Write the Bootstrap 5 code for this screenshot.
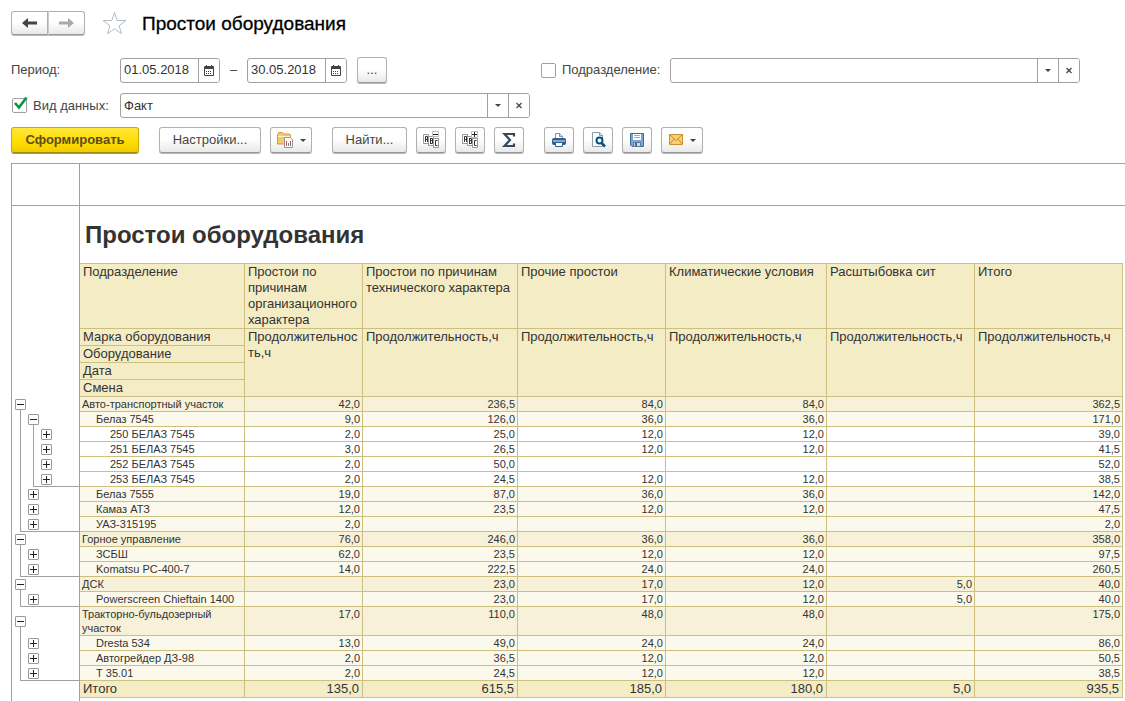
<!DOCTYPE html>
<html lang="ru">
<head>
<meta charset="utf-8">
<meta name="viewport" content="width=device-width, initial-scale=1">
<title>Простои оборудования</title>
<link rel="stylesheet" href="https://cdn.jsdelivr.net/npm/bootstrap@5.3.0/dist/css/bootstrap.min.css">
<style>
:root { --line: #a0a0a0; --gold: #ccbf80; --gutter: 69px; }
body { font: 13px/16px "Liberation Sans", Arial, sans-serif; color: #444; background: #fff; }
.page { padding: 10px 0 0 11px; }
.page-head { margin-bottom: 21px; }
.app-title { font-size: 19px; line-height: 24px; padding-top: 2px; color: #000; -webkit-text-stroke: 0.3px #000; }

/* push buttons */
.tool { display: inline-flex; align-items: center; justify-content: center; height: 26px; width: 30px; padding: 0;
  font-size: 13px; line-height: 16px; color: #444; border: 1px solid #b0b0b0; border-bottom-color: #989898; border-radius: 3px;
  background: linear-gradient(#fff 45%, #e9e9e9); box-shadow: 0 1px 0 #b8b8b8; }
.tool-main { width: 128px; font-weight: 700; color: #5c4e1c; border-color: #c9a800; border-bottom-color: #a08a10;
  background: linear-gradient(#ffe83a, #fddc00 60%, #f0cd00); box-shadow: 0 1px 0 #a89a50; }
.tool-settings { width: 102px; }
.tool-find { width: 75px; }
.tool-menu { width: 42px; gap: 6px; }
.history .tool { height: 24px; width: 37px; }
.history .tool + .tool { border-left-color: #ccc; }
.arrow { width: 0; height: 0; border: 3px solid transparent; border-top-color: #444; border-bottom: 0; }
.toolbar { gap: 20px; margin-bottom: 10px; }
.tool-set { display: flex; gap: 9px; }

/* fields */
.field { display: flex; height: 25px; border: 1px solid var(--line); border-radius: 3px; background: #fff; overflow: hidden; }
.field input, .field select { flex: 1 1 0; min-width: 0; border: 0; padding: 0 3px; background: none; appearance: none; font-size: 13px; color: #333; outline: 0; }
.field button { flex: none; width: 21px; padding: 0; border: 0; border-left: 1px solid var(--line); background: #fff; display: flex; align-items: center; justify-content: center; }
.field-date { width: 100px; }
.dash { width: 27px; }
.more { margin-left: 10px; }
.filters { grid-template-columns: 109px 410px 11px 129px minmax(0, 410px); row-gap: 10px; margin-bottom: 9px; }
.check { display: flex; align-items: center; gap: 6px; }
.tick { appearance: none; width: 15px; height: 15px; margin: 0; border: 1px solid var(--line); border-radius: 2px; background: #fff; }
.tick-box { width: 15px; height: 15px; margin-left: 1px; }
.tick-box svg { left: 1px; top: -2px; pointer-events: none; }

/* report sheet */
.report-area { color: #333; }
.gutter { flex: none; width: var(--gutter); border: 0 solid var(--line); border-width: 0 1px; }
.ruler { height: 43px; border: solid var(--line); border-width: 1px 0; }
.sheet-title { margin: 0; padding: 15px 5px 0; height: 57px; font-size: 24px; line-height: 28px; font-weight: 700; }
.report { table-layout: fixed; width: calc(100% - 2px); min-width: 1112px; border-collapse: separate; border-spacing: 0; font-size: 11px; line-height: 14px; }
.report th, .report td { padding: 0 2px; border: 0 solid var(--gold); border-width: 0 1px 1px 0; vertical-align: top; font-weight: 400; text-align: left; }
.report td { text-align: right; }
.report tbody tr { height: 15px; }
.report thead th { font-size: 13px; line-height: 16px; padding: 0 3px; background: #f4ecc5; }
.report thead tr { height: 17px; }
.report thead tr:first-child { height: 66px; }
.report thead tr:first-child th { border-top-width: 1px; }
.report tr > .rail { padding: 0; border: 0 solid var(--line); border-width: 0 1px; background-color: #fff; background-repeat: no-repeat; vertical-align: middle; text-align: left; line-height: 0; }
.g1 > * { background: #f7f1da; }
.g2 > * { background: #fbf9ec; }
.g2 > th { --in: 16px; }
.g3 > th { --in: 30px; }
.report tbody th { padding-left: var(--in, 2px); }
.report .total > * { font-size: 13px; line-height: 16px; background-color: #f4ecc5; }
.report .total > th { padding-left: 3px; }
.report .total > td { padding-right: 3px; }
.report .total { height: 17px; }

/* outline rails: "a" is the outer level, "b" the inner one */
.rail { --c: linear-gradient(var(--line), var(--line)); }
.report .a-start { background-image: var(--c); background-size: 1px 50%; background-position: 8px 100%; }
.report .a-mid { background-image: var(--c); background-size: 1px 100%; background-position: 8px 0; }
.report .a-end { background-image: var(--c), var(--c); background-size: 1px 100%, 100% 1px; background-position: 8px 0, 8px 100%; }
.report .b-start { background-image: var(--c), var(--c); background-size: 1px 100%, 1px 50%; background-position: 8px 0, 21px 100%; }
.report .b-mid { background-image: var(--c), var(--c); background-size: 1px 100%; background-position: 8px 0, 21px 0; }
.report .b-end { background-image: var(--c), var(--c), var(--c); background-size: 1px 100%, 1px 100%, 100% 1px; background-position: 8px 0, 21px 0, 21px 100%; }
.fold { display: block; width: 11px; height: 11px; padding: 0; margin-left: 3px; border: 1px solid #999; border-radius: 1px;
  background: linear-gradient(#222, #222) center / 7px 1px no-repeat #fff; }
.g2 .fold, .g3 .fold { background: linear-gradient(#222, #222) center / 7px 1px no-repeat, linear-gradient(#222, #222) center / 1px 7px no-repeat #fff; }
.g2 .b-start .fold { background: linear-gradient(#222, #222) center / 7px 1px no-repeat #fff; }
.g2 .fold { margin-left: 16px; }
.g3 .fold { margin-left: 29px; }
</style>
</head>
<body>
<div class="page d-flex flex-column min-vh-100">

  <header class="page-head d-flex align-items-center">
    <div class="history d-flex">
      <button class="tool rounded-end-0" type="button" aria-label="Назад"><svg width="15" height="10" viewBox="0 0 15 10"><path d="M0 5l6-5v3.500h9v3H6V10z" fill="#444"/></svg></button>
      <button class="tool rounded-start-0" type="button" aria-label="Вперёд"><svg width="15" height="10" viewBox="0 0 15 10"><path d="M15 5L9 0v3.500H0v3h9V10z" fill="#aaa"/></svg></button>
    </div>
    <svg class="ms-3 me-3" width="25" height="24" viewBox="0 0 25 24"><path d="M13.500 1.500l2.700 8H25l-7 5.200 2.600 8.100-7.100-5-7.100 5L9 14.700 2 9.500h8.800z" fill="#fff" stroke="#b4bcc4"/></svg>
    <h1 class="app-title m-0">Простои оборудования</h1>
  </header>

  <form class="filters d-grid align-items-center">
    <label for="from">Период:</label>
    <div class="d-flex align-items-center">
      <div class="field field-date"><input id="from" type="text" value="01.05.2018"><button type="button" aria-label="Календарь"><svg width="10" height="11" viewBox="0 0 10 11"><path d="M0 2q0-1 1-1h8q1 0 1 1v8q0 1-1 1H1q-1 0-1-1z" fill="#444"/><path d="M1 4h8v6H1z" fill="#fff"/><path d="M2.500 0v2M7.500 0v2" stroke="#444"/><path d="M2 6.500h6M2 8.500h6" stroke="#444" stroke-dasharray="1 1"/></svg></button></div>
      <span class="dash text-center">–</span>
      <div class="field field-date"><input type="text" value="30.05.2018" aria-label="Конец периода"><button type="button" aria-label="Календарь"><svg width="10" height="11" viewBox="0 0 10 11"><path d="M0 2q0-1 1-1h8q1 0 1 1v8q0 1-1 1H1q-1 0-1-1z" fill="#444"/><path d="M1 4h8v6H1z" fill="#fff"/><path d="M2.500 0v2M7.500 0v2" stroke="#444"/><path d="M2 6.500h6M2 8.500h6" stroke="#444" stroke-dasharray="1 1"/></svg></button></div>
      <button class="tool more" type="button">...</button>
    </div>
    <span></span>
    <div class="check"><input class="tick" id="dep-on" type="checkbox"><label for="dep-on">Подразделение:</label></div>
    <div class="field"><input type="text" aria-label="Подразделение"><button type="button" aria-label="Выбрать"><i class="arrow"></i></button><button type="button" aria-label="Очистить"><svg width="6" height="7" viewBox="0 0 6 7"><path d="M.5 1l5 5M5.500 1l-5 5" stroke="#444" stroke-width="1.200"/></svg></button></div>

    <div class="check"><span class="tick-box position-relative d-flex"><input class="tick" id="kind-on" type="checkbox" checked><svg class="position-absolute" width="15" height="14" viewBox="0 0 15 14"><path d="M2 7l4 4.500L13.500 1.500" fill="none" stroke="#009646" stroke-width="2.600"/></svg></span><label for="kind-on">Вид данных:</label></div>
    <div class="field"><select aria-label="Вид данных"><option>Факт</option></select><button type="button" aria-label="Выбрать"><i class="arrow"></i></button><button type="button" aria-label="Очистить"><svg width="6" height="7" viewBox="0 0 6 7"><path d="M.5 1l5 5M5.500 1l-5 5" stroke="#444" stroke-width="1.200"/></svg></button></div>
  </form>

  <div class="toolbar d-flex">
    <button class="tool tool-main" type="button">Сформировать</button>
    <div class="tool-set">
      <button class="tool tool-settings" type="button">Настройки...</button>
      <button class="tool tool-menu" type="button" aria-label="Варианты отчёта"><svg width="18" height="18" viewBox="0 0 18 18"><path d="M1.500 3.500l1-2h4l1 1.500h6l1 1v9H1.500z" fill="#f3c969" stroke="#cf9c45"/><path d="M2 5.500h12" stroke="#fff2c4"/><path d="M8.500 6.500h6l2 2v8h-8z" fill="#fff" stroke="#8799a8"/><path d="M10.500 10v5" stroke="#e0403a"/><path d="M12.500 12v3" stroke="#5a9a60"/><path d="M14.500 10v5" stroke="#e0403a"/></svg><i class="arrow"></i></button>
    </div>
    <div class="tool-set">
      <button class="tool tool-find" type="button">Найти...</button>
      <button class="tool" type="button" aria-label="Свернуть группы"><svg width="18" height="18" viewBox="0 0 18 18"><g fill="#fff" stroke="#999"><path d="M1.500 3.500h5v9h-5z"/><path d="M6.500 5.500h5v9h-5z"/><path d="M11.500 7.500h5v9h-5z"/></g><path d="M3.500 11V5.500h2V11M3.500 8.500h2M8.500 7v6M8.500 7.500h2v2h-2M10.500 9v3.500h-2M15.500 9.500h-2v5h2" fill="none" stroke="#333"/><path d="M10.500.5h6v5h-6z" fill="#fff" stroke="#bbb"/><path d="M11 3.500h5" stroke="#222"/></svg></button>
      <button class="tool" type="button" aria-label="Развернуть группы"><svg width="18" height="18" viewBox="0 0 18 18"><g fill="#fff" stroke="#999"><path d="M1.500 3.500h5v9h-5z"/><path d="M6.500 5.500h5v9h-5z"/><path d="M11.500 7.500h5v9h-5z"/></g><path d="M3.500 11V5.500h2V11M3.500 8.500h2M8.500 7v6M8.500 7.500h2v2h-2M10.500 9v3.500h-2M15.500 9.500h-2v5h2" fill="none" stroke="#333"/><path d="M10.500.5h6v6h-6z" fill="#fff" stroke="#bbb"/><path d="M11 3.500h5M13.500 1v5" stroke="#222"/></svg></button>
      <button class="tool" type="button" aria-label="Сумма"><svg width="14" height="16" viewBox="0 0 14 16"><path d="M12 4.500V2H2.500L8 8l-5.500 6H12v-2.500" fill="none" stroke="#34495e" stroke-width="2.200"/></svg></button>
    </div>
    <div class="tool-set">
      <button class="tool" type="button" aria-label="Печать"><svg width="16" height="16" viewBox="0 0 16 16"><path d="M4.500 7V1.500h4l3 3V7" fill="#fff" stroke="#7d94ad"/><path d="M8.500 1.500v3h3" fill="none" stroke="#7d94ad"/><rect x="1" y="6" width="14" height="7" rx="2" fill="#2f5d87"/><path d="M2 9h12" stroke="#7fa8d3" stroke-width="2"/><path d="M4.500 10.500h7v4h-7z" fill="#fff" stroke="#38618a"/></svg></button>
      <button class="tool" type="button" aria-label="Просмотр"><svg width="16" height="16" viewBox="0 0 16 16"><path d="M2.500.5h7l3 3v11h-10z" fill="#fff" stroke="#8a9bab"/><path d="M9.500.5v3h3" fill="none" stroke="#8a9bab"/><circle cx="9.500" cy="8.500" r="3" fill="#fff" stroke="#0b4f80" stroke-width="2"/><path d="M11.500 11l3.500 3.500" stroke="#0b4f80" stroke-width="2.500"/></svg></button>
      <button class="tool" type="button" aria-label="Сохранить"><svg width="14" height="14" viewBox="0 0 14 14"><path d="M.5.5h13v13H2L.5 12z" fill="#7ba6d6" stroke="#42699a"/><path d="M3 1h8v6H3z" fill="#fff"/><path d="M4 2.500h6M4 4.500h6" stroke="#8eb2dc"/><path d="M3.500 9.500h7v4h-7z" fill="#d5dbe0" stroke="#5b7896"/><path d="M5 10h2v3H5z" fill="#42699a"/></svg></button>
      <button class="tool tool-menu" type="button" aria-label="Отправить"><svg width="16" height="12" viewBox="0 0 16 12"><path d="M1.500.5h13v10h-13z" fill="#f8cf75" stroke="#c98f2e"/><path d="M2 1l6 5.500L14 1M2 10l4-5M14 10l-4-5" fill="none" stroke="#c98f2e"/></svg><i class="arrow"></i></button>
    </div>
  </div>

  <main class="report-area flex-grow-1 d-flex flex-column">
    <div class="ruler d-flex"><div class="gutter"></div></div>
    <div class="d-flex"><div class="gutter"></div><h2 class="sheet-title">Простои оборудования</h2></div>
    <table class="report">
      <colgroup><col style="width:69px"><col style="width:165px"><col style="width:118px"><col style="width:155px"><col style="width:148px"><col style="width:161px"><col style="width:148px"><col></colgroup>
      <thead>
        <tr><td class="rail" rowspan="5"></td><th>Подразделение</th><th>Простои по причинам организационного характера</th><th>Простои по причинам технического характера</th><th>Прочие простои</th><th>Климатические условия</th><th>Расштыбовка сит</th><th>Итого</th></tr>
        <tr><th>Марка оборудования</th><th rowspan="4">Продолжительнос<wbr>ть,ч</th><th rowspan="4">Продолжительность,ч</th><th rowspan="4">Продолжительность,ч</th><th rowspan="4">Продолжительность,ч</th><th rowspan="4">Продолжительность,ч</th><th rowspan="4">Продолжительность,ч</th></tr>
        <tr><th>Оборудование</th></tr>
        <tr><th>Дата</th></tr>
        <tr><th>Смена</th></tr>
      </thead>
      <tbody>
        <tr class="g1"><td class="rail a-start"><button class="fold" type="button" aria-label="Свернуть"></button></td><th>Авто-транспортный участок</th><td>42,0</td><td>236,5</td><td>84,0</td><td>84,0</td><td></td><td>362,5</td></tr>
        <tr class="g2"><td class="rail b-start"><button class="fold" type="button" aria-label="Свернуть"></button></td><th>Белаз 7545</th><td>9,0</td><td>126,0</td><td>36,0</td><td>36,0</td><td></td><td>171,0</td></tr>
        <tr class="g3"><td class="rail b-mid"><button class="fold" type="button" aria-label="Развернуть"></button></td><th>250 БЕЛАЗ 7545</th><td>2,0</td><td>25,0</td><td>12,0</td><td>12,0</td><td></td><td>39,0</td></tr>
        <tr class="g3"><td class="rail b-mid"><button class="fold" type="button" aria-label="Развернуть"></button></td><th>251 БЕЛАЗ 7545</th><td>3,0</td><td>26,5</td><td>12,0</td><td>12,0</td><td></td><td>41,5</td></tr>
        <tr class="g3"><td class="rail b-mid"><button class="fold" type="button" aria-label="Развернуть"></button></td><th>252 БЕЛАЗ 7545</th><td>2,0</td><td>50,0</td><td></td><td></td><td></td><td>52,0</td></tr>
        <tr class="g3"><td class="rail b-end"><button class="fold" type="button" aria-label="Развернуть"></button></td><th>253 БЕЛАЗ 7545</th><td>2,0</td><td>24,5</td><td>12,0</td><td>12,0</td><td></td><td>38,5</td></tr>
        <tr class="g2"><td class="rail a-mid"><button class="fold" type="button" aria-label="Развернуть"></button></td><th>Белаз 7555</th><td>19,0</td><td>87,0</td><td>36,0</td><td>36,0</td><td></td><td>142,0</td></tr>
        <tr class="g2"><td class="rail a-mid"><button class="fold" type="button" aria-label="Развернуть"></button></td><th>Камаз АТЗ</th><td>12,0</td><td>23,5</td><td>12,0</td><td>12,0</td><td></td><td>47,5</td></tr>
        <tr class="g2"><td class="rail a-end"><button class="fold" type="button" aria-label="Развернуть"></button></td><th>УАЗ-315195</th><td>2,0</td><td></td><td></td><td></td><td></td><td>2,0</td></tr>
        <tr class="g1"><td class="rail a-start"><button class="fold" type="button" aria-label="Свернуть"></button></td><th>Горное управление</th><td>76,0</td><td>246,0</td><td>36,0</td><td>36,0</td><td></td><td>358,0</td></tr>
        <tr class="g2"><td class="rail a-mid"><button class="fold" type="button" aria-label="Развернуть"></button></td><th>ЗСБШ</th><td>62,0</td><td>23,5</td><td>12,0</td><td>12,0</td><td></td><td>97,5</td></tr>
        <tr class="g2"><td class="rail a-end"><button class="fold" type="button" aria-label="Развернуть"></button></td><th>Komatsu PC-400-7</th><td>14,0</td><td>222,5</td><td>24,0</td><td>24,0</td><td></td><td>260,5</td></tr>
        <tr class="g1"><td class="rail a-start"><button class="fold" type="button" aria-label="Свернуть"></button></td><th>ДСК</th><td></td><td>23,0</td><td>17,0</td><td>12,0</td><td>5,0</td><td>40,0</td></tr>
        <tr class="g2"><td class="rail a-end"><button class="fold" type="button" aria-label="Развернуть"></button></td><th>Powerscreen Chieftain 1400</th><td></td><td>23,0</td><td>17,0</td><td>12,0</td><td>5,0</td><td>40,0</td></tr>
        <tr class="g1"><td class="rail a-start"><button class="fold" type="button" aria-label="Свернуть"></button></td><th>Тракторно-бульдозерный участок</th><td>17,0</td><td>110,0</td><td>48,0</td><td>48,0</td><td></td><td>175,0</td></tr>
        <tr class="g2"><td class="rail a-mid"><button class="fold" type="button" aria-label="Развернуть"></button></td><th>Dresta 534</th><td>13,0</td><td>49,0</td><td>24,0</td><td>24,0</td><td></td><td>86,0</td></tr>
        <tr class="g2"><td class="rail a-mid"><button class="fold" type="button" aria-label="Развернуть"></button></td><th>Автогрейдер ДЗ-98</th><td>2,0</td><td>36,5</td><td>12,0</td><td>12,0</td><td></td><td>50,5</td></tr>
        <tr class="g2"><td class="rail a-end"><button class="fold" type="button" aria-label="Развернуть"></button></td><th>Т 35.01</th><td>2,0</td><td>24,5</td><td>12,0</td><td>12,0</td><td></td><td>38,5</td></tr>
        <tr class="total"><td class="rail bg-white"></td><th>Итого</th><td>135,0</td><td>615,5</td><td>185,0</td><td>180,0</td><td>5,0</td><td>935,5</td></tr>
      </tbody>
    </table>
    <div class="gutter flex-grow-1"></div>
  </main>
</div>
<script src="https://cdn.jsdelivr.net/npm/bootstrap@5.3.0/dist/js/bootstrap.bundle.min.js"></script>
</body>
</html>
